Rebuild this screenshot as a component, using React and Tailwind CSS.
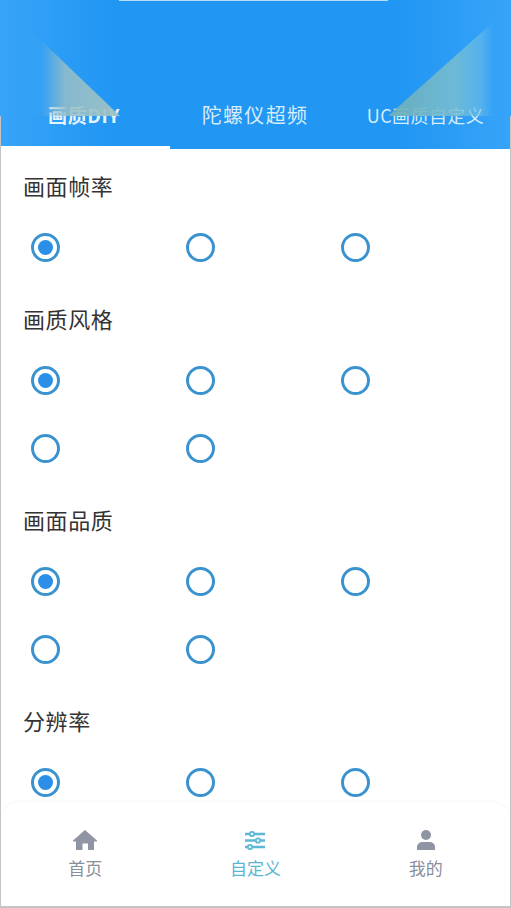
import React from "react";

function Radio({ on }) {
  return (
    <div className="w-[29px] h-[29px] rounded-full border-[3px] border-[#3a93cf] bg-white flex items-center justify-center">
      {on ? <div className="w-[15px] h-[15px] rounded-full bg-[#2b8fe8]" /> : null}
    </div>
  );
}

function Section({ title, count }) {
  return (
    <section className="mb-[24px]">
      <h2 className="h-[30px] mb-[11px] pl-[23px] text-[22px] leading-[25px] tracking-[0.6px] text-[#333333] font-normal">{title}</h2>
      <div className="grid grid-cols-[155px_155px_155px] pl-[31px]">
        {Array.from({ length: count }).map((_, i) => (
          <div key={i} className="h-[67px] mb-[1px] flex items-center">
            <Radio on={i === 0} />
          </div>
        ))}
      </div>
    </section>
  );
}

function Home() {
  return (
    <svg width="24" height="20" viewBox="0 0 24 20" fill="#9095a3">
      <path d="M12 0 L24 10.500 L24 11.500 L21 11.500 L21 20 L15 20 L15 13.500 L9.500 13.500 L9.500 20 L3 20 L3 11.500 L0 11.500 L0 10.500 Z" />
    </svg>
  );
}

function User() {
  return (
    <svg width="18" height="20" viewBox="0 0 18 20" fill="#9095a3">
      <circle cx="9" cy="5" r="5" />
      <path d="M0 20 L0 17 C0 13.500 3 12 5.500 12 L12.500 12 C15 12 18 13.500 18 17 L18 20 Z" />
    </svg>
  );
}

function Sliders() {
  return (
    <svg width="20" height="19" viewBox="0 0 20 19" fill="none" stroke="#5fb9d6" strokeWidth="2.4">
      <path d="M0 3h20M0 9.500h20M0 16h20" />
      <circle cx="7" cy="3" r="2.2" fill="#e8f6fa" strokeWidth="1.800" />
      <circle cx="13" cy="9.500" r="2.2" fill="#e8f6fa" strokeWidth="1.800" />
      <circle cx="5" cy="16" r="2.2" fill="#e8f6fa" strokeWidth="1.800" />
    </svg>
  );
}

function NavItem({ icon, label, active }) {
  return (
    <div className="flex-1 flex flex-col items-center">
      <div className="h-[24px] flex items-center justify-center">{icon}</div>
      <span className={"text-[17px] leading-[24px] mt-[4px] " + (active ? "text-[#5cb6d2]" : "text-[#8a8f9c]")}>{label}</span>
    </div>
  );
}

export default function App() {
  return (
    <div className="relative w-[511px] h-[908px] overflow-hidden bg-white font-['Noto_Sans_CJK_SC','Noto_Sans',sans-serif]">
      <header className="relative h-[149px] bg-[#2196f3] bg-[linear-gradient(90deg,#37a4f8_0%,#2196f3_22%,#2196f3_78%,#37a4f8_100%)]">
        <div className="h-[1px] ml-[119px] mr-[123px] bg-[#b9dcf5]" />
        <nav className="absolute left-0 right-0 top-[100px] flex h-[49px]">
          <div className="w-[170px] relative flex justify-center pt-[1px] pr-[2px]">
            <span className="text-[19px] leading-[28px] tracking-[0.6px] font-bold text-[#e4f3fc]">画质DIY</span>
            <div className="absolute left-0 right-0 bottom-0 h-[3px] bg-white" />
          </div>
          <div className="w-[170px] flex justify-center pt-[1px]">
            <span className="text-[20px] leading-[28px] tracking-[1.3px] text-[#d5ecfa]">陀螺仪超频</span>
          </div>
          <div className="w-[171px] flex justify-center pt-[1px]">
            <span className="text-[18px] leading-[28px] tracking-[0.4px] text-[#d5ecfa] whitespace-nowrap">UC画质自定义</span>
          </div>
        </nav>
        <div className="absolute left-[28px] top-[28px] w-[92px] h-[88px] bg-[linear-gradient(90deg,rgba(110,175,225,0)_0%,rgba(110,175,225,0.1)_15%,rgba(150,190,200,0.85)_40%,rgba(160,195,195,0.95)_100%)] [clip-path:polygon(0_0,100%_100%,0_100%)]" />
        <div className="absolute left-[388px] top-[6px] w-[123px] h-[110px] bg-[linear-gradient(90deg,rgba(110,175,185,0.95)_0%,rgba(120,190,210,0.85)_55%,rgba(110,190,230,0.6)_75%,rgba(90,175,235,0)_86%)] [clip-path:polygon(100%_0,100%_100%,0_100%)]" />
      </header>

      <main className="pt-[24px]">
        <Section title="画面帧率" count={3} />
        <Section title="画质风格" count={5} />
        <Section title="画面品质" count={5} />
        <Section title="分辨率" count={3} />
      </main>

      <footer className="absolute left-0 right-0 bottom-0 h-[106px] pt-[26px] flex bg-white rounded-t-[20px] shadow-[0_-1px_3px_rgba(0,0,0,0.04)]">
        <NavItem label="首页" icon={<Home />} />
        <NavItem label="自定义" active icon={<Sliders />} />
        <NavItem label="我的" icon={<User />} />
      </footer>
      <div className="absolute left-0 top-[116px] bottom-0 w-[1px] bg-[#c4c4c4]" />
      <div className="absolute right-0 top-[116px] bottom-0 w-[1px] bg-[#c4c4c4]" />
      <div className="absolute left-0 right-0 bottom-0 h-[2px] bg-[#c4c4c4]" />
    </div>
  );
}
